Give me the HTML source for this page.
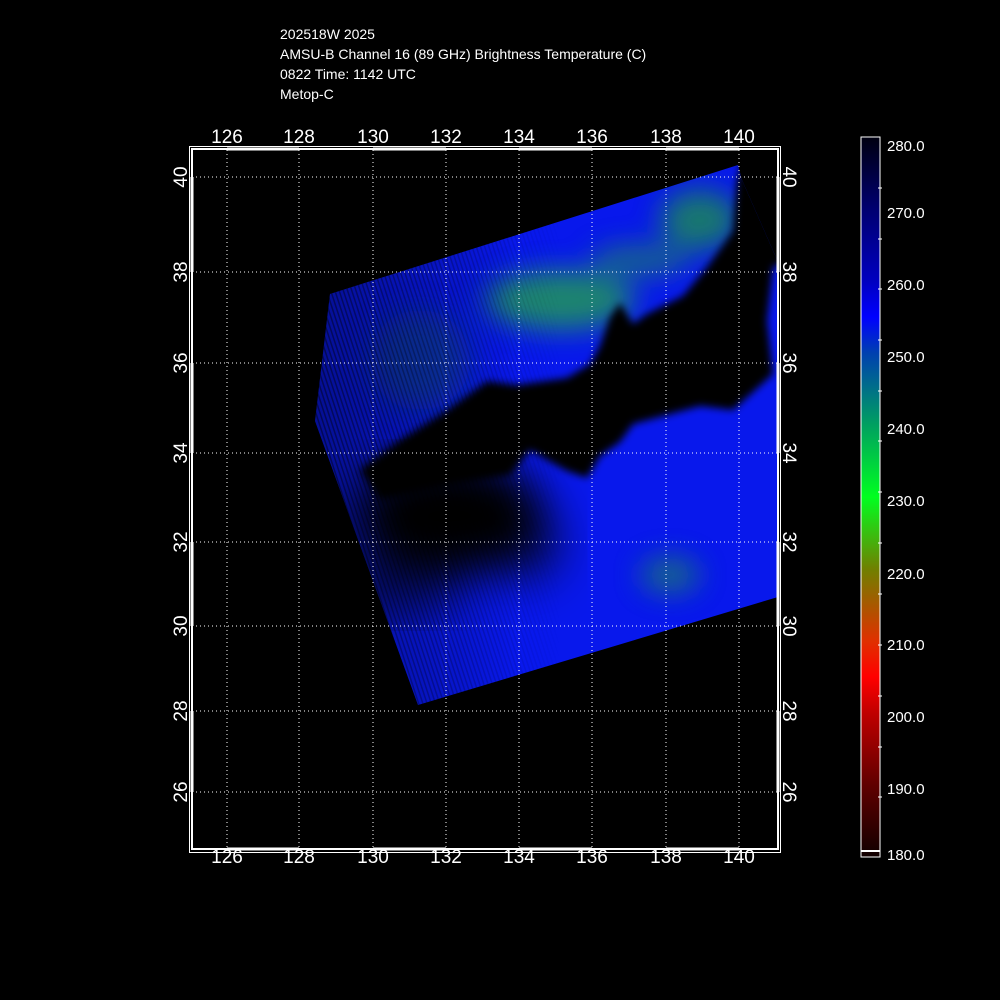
<!DOCTYPE html>
<html><head><style>
html,body{margin:0;padding:0;background:#000;width:1000px;height:1000px;overflow:hidden}
svg{display:block}
text{font-family:"Liberation Sans",sans-serif;fill:#fff}
</style></head><body>
<svg width="1000" height="1000" viewBox="0 0 1000 1000">
<defs>
<filter id="b4"><feGaussianBlur stdDeviation="4"/></filter>
<filter id="b12"><feGaussianBlur stdDeviation="14"/></filter>
<filter id="b20"><feGaussianBlur stdDeviation="22"/></filter>
<clipPath id="sw"><polygon points="330,294 738,165 742,180 778,262 778,597 418,705 315,421"/></clipPath>
<linearGradient id="cb" x1="0" y1="0" x2="0" y2="1">
<stop offset="0" stop-color="#000010"/>
<stop offset="0.1" stop-color="#000070"/>
<stop offset="0.2" stop-color="#0000c0"/>
<stop offset="0.25" stop-color="#0000ff"/>
<stop offset="0.3" stop-color="#0040b0"/>
<stop offset="0.4" stop-color="#00a060"/>
<stop offset="0.5" stop-color="#00ff20"/>
<stop offset="0.6" stop-color="#708000"/>
<stop offset="0.7" stop-color="#e03000"/>
<stop offset="0.75" stop-color="#ff0000"/>
<stop offset="0.8" stop-color="#c00000"/>
<stop offset="0.9" stop-color="#600000"/>
<stop offset="1" stop-color="#100000"/>
</linearGradient>
<linearGradient id="lf" x1="0" y1="0" x2="1" y2="0">
<stop offset="0" stop-color="#000" stop-opacity="0.4"/>
<stop offset="0.3" stop-color="#000" stop-opacity="0.15"/>
<stop offset="0.45" stop-color="#000" stop-opacity="0"/>
</linearGradient>
<linearGradient id="fm" x1="0" y1="0" x2="1" y2="0">
<stop offset="0" stop-color="#fff" stop-opacity="1"/>
<stop offset="0.6" stop-color="#fff" stop-opacity="0.5"/>
<stop offset="1" stop-color="#fff" stop-opacity="0"/>
</linearGradient>
<mask id="fmask"><rect x="300" y="150" width="260" height="570" fill="url(#fm)"/></mask>
<pattern id="st" width="4" height="4" patternUnits="userSpaceOnUse" patternTransform="rotate(-18)">
<rect width="1.5" height="4" fill="#000" fill-opacity="0.45"/>
</pattern>
</defs>

<text x="280" y="39" font-size="14">202518W 2025</text>
<text x="280" y="59" font-size="14">AMSU-B Channel 16 (89 GHz) Brightness Temperature (C)</text>
<text x="280" y="79" font-size="14">0822 Time: 1142 UTC</text>
<text x="280" y="99" font-size="14">Metop-C</text>

<g clip-path="url(#sw)">
<rect x="300" y="150" width="490" height="570" fill="#0818ec"/>
<g filter="url(#b12)" opacity="0.8">
<ellipse cx="560" cy="300" rx="75" ry="30" fill="#20a050"/>
<ellipse cx="700" cy="220" rx="40" ry="30" fill="#1c9050"/>
<ellipse cx="640" cy="260" rx="50" ry="15" fill="#1a7a70"/>
<ellipse cx="670" cy="575" rx="30" ry="18" fill="#1a7a70"/>
<ellipse cx="420" cy="360" rx="50" ry="50" fill="#103aa0"/>
</g>
<rect x="300" y="150" width="260" height="570" fill="url(#st)" mask="url(#fmask)"/>
<rect x="300" y="150" width="490" height="570" fill="url(#lf)"/>
<g filter="url(#b4)" fill="#000">
<polygon points="737,181 733,231 707,267 683,296 647,314 633,324 620,303 610,317 600,346 590,364 567,378 517,385 487,381 447,410 400,440 360,470 380,500 450,485 510,475 530,450 547,460 567,471 587,478 600,456 620,442 633,424 700,406 733,410 773,374 767,321 773,267 790,260 790,150 745,150"/>
</g>
<g filter="url(#b20)" fill="#000">
<ellipse cx="450" cy="515" rx="95" ry="60"/>
<ellipse cx="400" cy="585" rx="60" ry="30" opacity="0.5"/>
<ellipse cx="525" cy="545" rx="40" ry="40" opacity="0.5"/>
</g>
</g>

<g stroke="#fff" stroke-width="1" stroke-dasharray="1,3" fill="none">
<line x1="227" y1="150" x2="227" y2="850"/><line x1="299" y1="150" x2="299" y2="850"/>
<line x1="373" y1="150" x2="373" y2="850"/><line x1="446" y1="150" x2="446" y2="850"/>
<line x1="519" y1="150" x2="519" y2="850"/><line x1="592" y1="150" x2="592" y2="850"/>
<line x1="666" y1="150" x2="666" y2="850"/><line x1="739" y1="150" x2="739" y2="850"/>
<line x1="192" y1="177" x2="778" y2="177"/><line x1="192" y1="272" x2="778" y2="272"/>
<line x1="192" y1="363" x2="778" y2="363"/><line x1="192" y1="453" x2="778" y2="453"/>
<line x1="192" y1="542" x2="778" y2="542"/><line x1="192" y1="626" x2="778" y2="626"/>
<line x1="192" y1="711" x2="778" y2="711"/><line x1="192" y1="792" x2="778" y2="792"/>
</g>
<rect x="189.5" y="146.5" width="591" height="706" fill="none" stroke="#fff" stroke-width="1"/>
<rect x="192" y="149" width="586" height="700" fill="none" stroke="#fff" stroke-width="2"/>
<g stroke="#fff" stroke-width="3">
<line x1="227" y1="149" x2="299" y2="149"/><line x1="373" y1="149" x2="446" y2="149"/><line x1="519" y1="149" x2="592" y2="149"/><line x1="666" y1="149" x2="739" y2="149"/>
<line x1="227" y1="849" x2="299" y2="849"/><line x1="373" y1="849" x2="446" y2="849"/><line x1="519" y1="849" x2="592" y2="849"/><line x1="666" y1="849" x2="739" y2="849"/>
<line x1="192" y1="177" x2="192" y2="272"/><line x1="192" y1="363" x2="192" y2="453"/><line x1="192" y1="542" x2="192" y2="626"/><line x1="192" y1="711" x2="192" y2="792"/>
<line x1="778" y1="177" x2="778" y2="272"/><line x1="778" y1="363" x2="778" y2="453"/><line x1="778" y1="542" x2="778" y2="626"/><line x1="778" y1="711" x2="778" y2="792"/>
</g>

<g font-size="19" text-anchor="middle">
<text x="227" y="143">126</text><text x="299" y="143">128</text><text x="373" y="143">130</text><text x="446" y="143">132</text>
<text x="519" y="143">134</text><text x="592" y="143">136</text><text x="666" y="143">138</text><text x="739" y="143">140</text>
<text x="227" y="863">126</text><text x="299" y="863">128</text><text x="373" y="863">130</text><text x="446" y="863">132</text>
<text x="519" y="863">134</text><text x="592" y="863">136</text><text x="666" y="863">138</text><text x="739" y="863">140</text>
<text transform="translate(187,177) rotate(-90)">40</text><text transform="translate(187,272) rotate(-90)">38</text>
<text transform="translate(187,363) rotate(-90)">36</text><text transform="translate(187,453) rotate(-90)">34</text>
<text transform="translate(187,542) rotate(-90)">32</text><text transform="translate(187,626) rotate(-90)">30</text>
<text transform="translate(187,711) rotate(-90)">28</text><text transform="translate(187,792) rotate(-90)">26</text>
<text transform="translate(783,177) rotate(90)">40</text><text transform="translate(783,272) rotate(90)">38</text>
<text transform="translate(783,363) rotate(90)">36</text><text transform="translate(783,453) rotate(90)">34</text>
<text transform="translate(783,542) rotate(90)">32</text><text transform="translate(783,626) rotate(90)">30</text>
<text transform="translate(783,711) rotate(90)">28</text><text transform="translate(783,792) rotate(90)">26</text>
</g>

<rect x="861" y="137" width="19" height="720" fill="url(#cb)" stroke="#fff" stroke-width="1"/>
<line x1="861" y1="851" x2="880" y2="851" stroke="#fff" stroke-width="2"/>
<g stroke="#fff" stroke-width="1">
<line x1="878" y1="188" x2="882" y2="188"/><line x1="878" y1="239" x2="882" y2="239"/><line x1="878" y1="289" x2="882" y2="289"/>
<line x1="878" y1="340" x2="882" y2="340"/><line x1="878" y1="391" x2="882" y2="391"/><line x1="878" y1="441" x2="882" y2="441"/>
<line x1="878" y1="492" x2="882" y2="492"/><line x1="878" y1="543" x2="882" y2="543"/><line x1="878" y1="594" x2="882" y2="594"/>
<line x1="878" y1="645" x2="882" y2="645"/><line x1="878" y1="696" x2="882" y2="696"/><line x1="878" y1="747" x2="882" y2="747"/><line x1="878" y1="797" x2="882" y2="797"/>
</g>
<g font-size="15">
<text x="887" y="151">280.0</text><text x="887" y="218">270.0</text><text x="887" y="290">260.0</text>
<text x="887" y="362">250.0</text><text x="887" y="434">240.0</text><text x="887" y="506">230.0</text>
<text x="887" y="579">220.0</text><text x="887" y="650">210.0</text><text x="887" y="722">200.0</text>
<text x="887" y="794">190.0</text><text x="887" y="860">180.0</text>
</g>
</svg>
</body></html>
